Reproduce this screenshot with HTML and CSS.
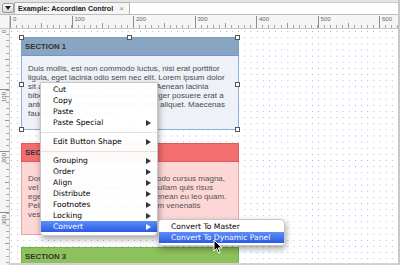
FILE: index.html
```html
<!DOCTYPE html>
<html>
<head>
<meta charset="utf-8">
<link rel="stylesheet" href="styles.css">
</head>
<body>
<div class="app">
  <div class="tabbar">
    <div class="tabbtn"><span class="tri"></span></div>
    <div class="tab"><span class="ttl">Example: Accordian Control</span><span class="close">×</span></div>
    <div class="tabfill"></div>
  </div>
  <div class="hrow">
    <div class="corner"></div>
    <div class="hruler">
      <span>0</span><span>100</span><span>200</span><span>300</span><span>400</span><span>500</span><span>600</span>
    </div>
  </div>
  <div class="main">
    <div class="vruler">
      <div class="vl"><span>0</span></div>
      <div class="vl"><span>100</span></div>
      <div class="vl"><span>200</span></div>
      <div class="vl"><span>300</span></div>
    </div>
    <div class="canvas">
      <div class="sec s1">
        <div class="sh">SECTION 1</div>
        <div class="sb">Duis mollis, est non commodo luctus, nisi erat porttitor<br>ligula, eget lacinia odio sem nec elit. Lorem ipsum dolor<br>sit amet, consectetur adipiscing elit. Aenean lacinia<br>bibendum nulla sed consectetur. Integer posuere erat a<br>ante venenatis dapibus posuere velit aliquet. Maecenas<br>faucibus mollis interdum.</div>
        <span class="h tl"></span><span class="h tm"></span><span class="h tr"></span>
        <span class="h ml"></span><span class="h mr"></span>
        <span class="h bl"></span><span class="h bm"></span><span class="h br"></span>
      </div>
      <div class="sec s2">
        <div class="sh">SECTION 2</div>
        <div class="sb">Donec sed odio dui. Praesent commodo cursus magna,<br>vel scelerisque nisl consectetur et. Nullam quis risus<br>eget urna mollis ornare vel eu leo. Aenean eu leo quam.<br>Pellentesque ornare sem lacinia quam venenatis<br>vestibulum.</div>
      </div>
      <div class="sec s3">
        <div class="sh">SECTION 3</div>
      </div>
    </div>
  </div>

  <div class="menu">
    <div class="mi">Cut</div>
    <div class="mi">Copy</div>
    <div class="mi">Paste</div>
    <div class="mi">Paste Special <span class="arr"></span></div>
    <div class="sep"></div>
    <div class="mi">Edit Button Shape <span class="arr"></span></div>
    <div class="sep"></div>
    <div class="mi">Grouping <span class="arr"></span></div>
    <div class="mi">Order <span class="arr"></span></div>
    <div class="mi">Align <span class="arr"></span></div>
    <div class="mi">Distribute <span class="arr"></span></div>
    <div class="mi">Footnotes <span class="arr"></span></div>
    <div class="mi">Locking <span class="arr"></span></div>
    <div class="mi hi">Convert <span class="arr"></span></div>
  </div>
  <div class="submenu">
    <div class="mi">Convert To Master</div>
    <div class="mi hi">Convert To Dynamic Panel</div>
  </div>
  <svg class="cursor" width="10" height="15" viewBox="0 0 10 15">
    <path d="M1 1 L1 12 L3.6 9.5 L5.6 14 L7.2 13.3 L5.3 8.9 L8.8 8.9 Z" fill="#000" stroke="#fff" stroke-width="1" stroke-linejoin="round"/>
  </svg>
</div>
</body>
</html>
```
FILE: styles.css
```css
* { box-sizing: border-box; margin: 0; padding: 0; }
html, body { width: 400px; height: 265px; overflow: hidden; background: #fff; }
body { font-family: "Liberation Sans", Arial, sans-serif; }

.app {
  position: relative;
  width: 400px;
  height: 265px;
  display: flex;
  flex-direction: column;
  border-right: 2px solid #c9c9c9;
}

/* tab bar */
.tabbar {
  flex: none;
  height: 15px;
  display: flex;
  background: #e4e4e4;
  padding-top: 2px;
  border-bottom: 1px solid #bcbcbc;
}
.tabbtn {
  width: 12px;
  margin: 1px 0 1px 2px;
  border: 1px solid #9a9a9a;
  border-radius: 2px;
  background: linear-gradient(#fdfdfd, #d8d8d8);
  display: flex;
  align-items: center;
  justify-content: center;
}
.tri {
  width: 0; height: 0;
  border-left: 3px solid transparent;
  border-right: 3px solid transparent;
  border-top: 4px solid #222;
}
.tab {
  width: 116px;
  background: #f5f5f5;
  border: 1px solid #b3b3b3;
  border-bottom: none;
  display: flex;
  align-items: center;
  padding-left: 3px;
  white-space: nowrap;
}
.ttl { font-weight: bold; font-size: 7.1px; color: #222; }
.close {
  margin-left: auto;
  margin-right: 5px;
  color: #8a8a8a;
  font-size: 8px;
}
.tabfill { flex: 1; background: #fff; border-top: 1px solid #cfcfcf; }

/* rulers */
.hrow {
  flex: none;
  height: 14px;
  display: flex;
  background: #f5f5f5;
  border-bottom: 1px solid #c8c8c8;
}
.corner { width: 10px; border-right: 1px solid #cfcfcf; }
.hruler {
  flex: 1;
  display: flex;
  overflow: hidden;
  padding-left: 1px;
  font-size: 6px;
  line-height: 8px;
  color: #666;
  background-image:
    repeating-linear-gradient(to right, #8c8c8c 0 1px, transparent 1px 61.5px),
    repeating-linear-gradient(to right, #9a9a9a 0 1px, transparent 1px 30.75px),
    repeating-linear-gradient(to right, #a8a8a8 0 1px, transparent 1px 6.15px);
  background-size: 100% 12px, 100% 5px, 100% 3px;
  background-position: 0 100%, 0 100%, 0 100%;
  background-repeat: no-repeat;
}
.hruler span { flex: none; width: 61.5px; padding-left: 2px; }

.main { flex: 1; display: flex; min-height: 0; }
.vruler {
  flex: none;
  width: 10px;
  overflow: hidden;
  background-color: #f5f5f5;
  border-right: 1px solid #c8c8c8;
  font-size: 6px;
  color: #666;
  background-image:
    repeating-linear-gradient(to bottom, #8c8c8c 0 1px, transparent 1px 61.5px),
    repeating-linear-gradient(to bottom, #9a9a9a 0 1px, transparent 1px 30.75px),
    repeating-linear-gradient(to bottom, #a8a8a8 0 1px, transparent 1px 6.15px);
  background-size: 9px 100%, 4px 100%, 3px 100%;
  background-position: 100% -1px, 100% -1px, 100% -1px;
  background-repeat: no-repeat;
}
.vl { height: 61.5px; padding: 1px 0 0 1px; display: flex; align-items: flex-start; }
.vl span { writing-mode: vertical-rl; transform: rotate(180deg); line-height: 7px; }

/* canvas */
.canvas {
  flex: 1;
  overflow: hidden;
  padding: 8px 0 0 11px;
  border-bottom: 2px solid #d2d2d2;
  background-color: #fff;
  background-image:
    linear-gradient(to right, #fff 5.15px, transparent 5.15px),
    linear-gradient(to bottom, #fff 5.15px, #97a3ee 5.15px);
  background-size: 6.15px 6.15px;
  background-position: -4.15px -3.15px;
}

.sec { position: relative; width: 218px; }
.s1 { margin-bottom: 13px; }
.s2 { margin-bottom: 12px; }
.sh {
  height: 19px;
  line-height: 18px;
  padding-left: 3px;
  font-weight: bold;
  font-size: 7.8px;
  color: #333;
  border: 1px solid;
}
.sb {
  border: 1px solid;
  border-top: none;
  font-size: 8px;
  line-height: 9px;
  padding: 8px 6px;
  color: #4a4a4a;
  white-space: nowrap;
  overflow: hidden;
}
.s1 .sh { background: #88a5c2; border-color: #7b9dc0; border-bottom-color: #6a98d2; }
.s1 .sb { height: 74px; background: #eef2f8; border-color: #8fb0d8; }
.s2 .sh { background: #f36e6e; border-color: #dc5b5b; }
.s2 .sb { height: 73px; padding-top: 12px; background: #fdd6d6; border-color: #e6a6a6; color: #555; }
.s3 .sh { background: #8dc15b; border-color: #78ad48; }

.h {
  position: absolute;
  width: 5px; height: 5px;
  border: 1px solid #555;
  background: #fff;
}
.tl { left: -2px; top: -2px; }
.tm { left: 106px; top: -2px; }
.tr { right: -1px; top: -2px; }
.ml { left: -2px; top: 45px; }
.mr { right: -1px; top: 45px; }
.bl { left: -2px; bottom: -2px; }
.bm { left: 106px; bottom: -2px; }
.br { right: -1px; bottom: -2px; }

/* context menu */
.menu, .submenu {
  position: absolute;
  background: rgba(255, 255, 255, 0.97);
  border: 1px solid #c6c6c6;
  border-radius: 0 0 4px 4px;
  box-shadow: 1px 3px 6px rgba(0, 0, 0, 0.35);
  font-family: "DejaVu Sans", sans-serif;
  font-size: 7.6px;
  color: #000;
}
.menu { left: 40px; top: 82px; width: 118px; padding: 1px 0 3px; }
.submenu { left: 158px; top: 219px; width: 127px; padding: 1px 0 2px; border-radius: 4px; }
.mi {
  height: 11px;
  line-height: 11px;
  padding: 0 6px 0 12px;
  display: flex;
  align-items: center;
  justify-content: space-between;
  white-space: nowrap;
}
.sep { height: 8px; display: flex; align-items: center; }
.sep::after { content: ""; flex: 1; height: 1px; background: #e2e2e2; }
.arr {
  width: 0; height: 0;
  border-top: 3px solid transparent;
  border-bottom: 3px solid transparent;
  border-left: 5px solid #333;
}
.hi { background: linear-gradient(#5d8ef7, #2a5be6); color: #fff; }
.hi .arr { border-left-color: #fff; }

.cursor { position: absolute; left: 213px; top: 239px; }
```
